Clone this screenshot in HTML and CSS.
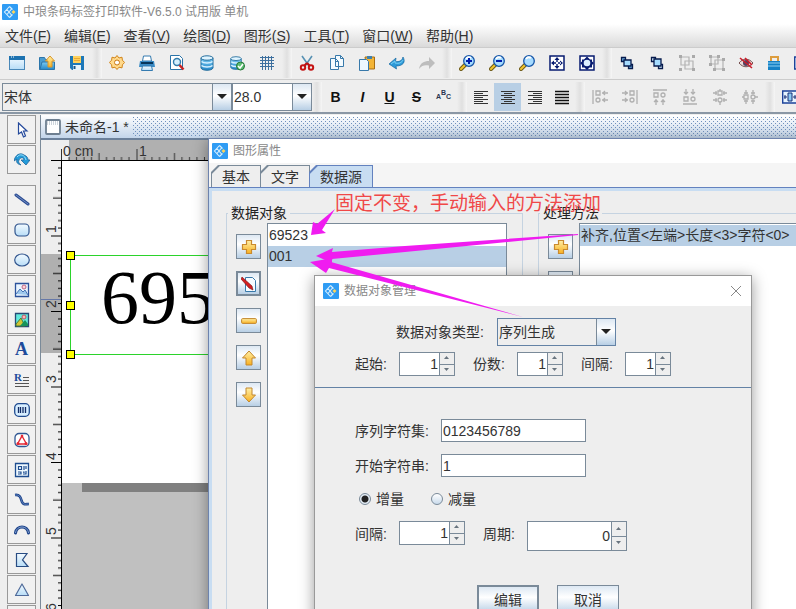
FILE: index.html
```html
<!DOCTYPE html>
<html lang="zh-CN">
<head>
<meta charset="utf-8">
<title>中琅条码标签打印软件</title>
<link rel="stylesheet" href="styles.css">
</head>
<body>
<svg class="sprite" aria-hidden="true">
  <defs>
    <linearGradient id="sky" x1="0" y1="0" x2="0" y2="1"><stop offset="0" stop-color="#f4fbff"/><stop offset="1" stop-color="#b8ddf7"/></linearGradient>
    <linearGradient id="blue" x1="0" y1="0" x2="0" y2="1"><stop offset="0" stop-color="#7ccbf3"/><stop offset="1" stop-color="#2487c8"/></linearGradient>
    <linearGradient id="gold" x1="0" y1="0" x2="0" y2="1"><stop offset="0" stop-color="#fff0a8"/><stop offset="1" stop-color="#f8b020"/></linearGradient>
  </defs>
  <symbol id="logo" viewBox="0 0 16 16"><rect width="16" height="16" rx="1" fill="#2f9cf4"/><path d="m7.500 2.500-5 5.500 5 5.500M9.500 5 7 8l2.500 3M7.500 2.500l3 3M7.500 13.500l3-3M5 5.500l2 2.500-2 2.500" fill="none" stroke="#d6efff" stroke-width="1.100"/><path d="m11.500 6 2 2-2 2-2-2z" fill="#ffd45a"/></symbol>
  <symbol id="new" viewBox="0 0 16 16"><rect x=".5" y="1.500" width="15" height="13" fill="url(#sky)" stroke="#4a88b8"/><path d="M0 1h16v4H0z" fill="#1d72b0"/><path d="M2 2h1m1 0h1" stroke="#fff"/></symbol>
  <symbol id="open" viewBox="0 0 16 16"><path d="M.5 14.500v-12h5l1 2h4v10z" fill="#4a9cd0" stroke="#2b75aa"/><path d="M1 14.500 3 7h12.500v7.500z" fill="url(#blue)" stroke="#2b75aa"/><path d="m11 1 4.500 5H13v6H9V6H6.500z" fill="url(#gold)" stroke="#d8962a"/></symbol>
  <symbol id="save" viewBox="0 0 16 16"><path d="M1 1h14v14H3l-2-2z" fill="#1d78b8"/><path d="M4 1h8v7H4z" fill="#ffd35c"/><path d="M5 3.500h6M5 5.500h6" stroke="#e8a838"/><path d="M4 10h8v5H4z" fill="#e5f3fc"/><path d="M5.500 11v3" stroke="#14578a" stroke-width="2"/></symbol>
  <symbol id="gear" viewBox="0 0 16 16"><path d="M8 .5 10 3l3-.8.4 3 2.200 2.300-2.200 2.300-.4 3.100-3-.7-2 2.300-2-2.300-3 .7-.4-3.100L.4 7.500l2.200-2.300.4-3 3 .8z" fill="#ffd98c" stroke="#d18419"/><circle cx="8" cy="7.500" r="2.500" fill="#fff" stroke="#c97813"/></symbol>
  <symbol id="print" viewBox="0 0 16 16"><path d="M4.500 1h7l1 5h-9z" fill="#fff" stroke="#347bb0"/><path d="M1 6h14l1 6H0z" fill="#3a8ac4"/><path d="M2 8h12" stroke="#08355a" stroke-width="2"/><path d="m3.500 11-1 4.500h11l-1-4.500z" fill="url(#sky)" stroke="#347bb0"/></symbol>
  <symbol id="preview" viewBox="0 0 16 16"><path d="M1.500.5h9l3 3v11h-12z" fill="#fff" stroke="#2a73a8"/><circle cx="8" cy="7" r="3.500" fill="#d5effd" stroke="#317bab" stroke-width="1.400"/><path d="m10.500 10 4 4.500" stroke="#c52525" stroke-width="2.500"/></symbol>
  <symbol id="db" viewBox="0 0 16 16"><path d="M2 3v10c1 3 11 3 12 0V3" fill="url(#blue)" stroke="#256e9d"/><ellipse cx="8" cy="3" rx="6" ry="2.200" fill="#dff4ff" stroke="#256e9d"/><path d="M2.500 6.500c2 2 9 2 11 0m-11 4c2 2 9 2 11 0" fill="none" stroke="#d7f1ff" stroke-width="1.500"/></symbol>
  <symbol id="dbok" viewBox="0 0 16 16"><use href="#db" width="14" height="16"/><circle cx="11.500" cy="11" r="4" fill="#5cbc70" stroke="#217535"/><path d="m9 11 2 2 3-4" fill="none" stroke="#fff" stroke-width="1.500"/></symbol>
  <symbol id="grid" viewBox="0 0 16 16"><path d="M1 2.500h14m-14 3h14m-14 3h14m-14 3h14M3.500 1v14m3-14v14m3-14v14m3-14v14" stroke="#3c6f9e"/></symbol>
  <symbol id="cut" viewBox="0 0 16 16"><path d="m3 1 7 10M13 1 6 11" stroke="#5791b3" stroke-width="1.600"/><path d="m8 8-3 3m3-3 3 3" stroke="#bd1111" stroke-width="2"/><circle cx="4" cy="12.500" r="2.200" fill="none" stroke="#c51313" stroke-width="2"/><circle cx="12" cy="12.500" r="2.200" fill="none" stroke="#c51313" stroke-width="2"/></symbol>
  <symbol id="copy" viewBox="0 0 16 16"><path d="M6.500.5h5l3 3v8h-8zM1.500 3.500h5l3 3v8h-8z" fill="#f4fbff" stroke="#3879aa"/><path d="M11.500.5v3h3M6.500 3.500v3h3" fill="none" stroke="#3879aa"/></symbol>
  <symbol id="paste" viewBox="0 0 16 16"><path d="M6 2h9.500v12H8z" fill="#f3b436" stroke="#a76d14"/><path d="M8 1h5v3H8z" fill="#3d81ae"/><path d="M.5 4.500h7l2 2v9h-9z" fill="#edf8ff" stroke="#3879aa"/></symbol>
  <symbol id="undo" viewBox="0 0 16 16"><path d="M0 9 7 3l-.5 3.500C10 7 13 6 14 2c3 5 0 9-7 9l.5 3z" fill="#2d9ad8" stroke="#1868a0" stroke-width=".7"/><path d="m2 9 4-3v2c4 1 7-.5 8-3" fill="none" stroke="#7ad1f6"/></symbol>
  <symbol id="redo" viewBox="0 0 16 16"><path d="M16 8 10 2v4C5 6 1 8 0 14c3-4 6-4 10-3.500V14z" fill="#bdbdbd"/></symbol>
  <symbol id="lens" viewBox="0 0 16 16"><path d="M6.500 9.500 2 14" stroke="#6f5b16" stroke-width="4" stroke-linecap="round"/><path d="M6 10 2 14" stroke="#f2c42b" stroke-width="2" stroke-linecap="round"/><circle cx="10" cy="6" r="5.300" fill="#a6dbff" stroke="#1555a8" stroke-width="1.300"/><path d="M7 4q2-3 5-1" fill="none" stroke="#fff" stroke-width="2"/></symbol>
  <symbol id="zoomin" viewBox="0 0 16 16"><use href="#lens"/><path d="M7 6h6m-3-3v6" stroke="#001cac" stroke-width="2"/></symbol>
  <symbol id="zoomout" viewBox="0 0 16 16"><use href="#lens"/><path d="M7 6h6" stroke="#001cac" stroke-width="2"/></symbol>
  <symbol id="fit" viewBox="0 0 16 16"><path d="M1 1h14v14H1z" fill="#fff" stroke="#071b70" stroke-width="1.500"/><path d="m8 2 2.500 3h-5zM8 14l-2.500-3h5zM2 8l3-2.500v5zm12 0-3-2.500v5zM7.300 4h1.400v3H7.300zm0 5h1.400v3H7.300zM4 7.300h3v1.400H4zm5 0h3v1.400H9z" fill="#071b70"/></symbol>
  <symbol id="full" viewBox="0 0 16 16"><path d="M1 1h14v14H1z" fill="#fff" stroke="#071b70" stroke-width="1.500"/><path d="m8 1.500 3 3h2v2l2 1.500-2 2v2.500h-2.500L8 15l-2.500-2.500H3V10L1 8l2-1.500v-2h2z" fill="#071b70"/><circle cx="8" cy="8" r="3.300" fill="#dcefff"/></symbol>
  <symbol id="front" viewBox="0 0 16 16"><path d="M2.500 2.500h4v4h-4zm7 7h4v4h-4z" fill="#6badde" stroke="#071b4d" stroke-width="1.300"/><path d="M5 5h7v6H5z" fill="#a6dcff" stroke="#071b4d" stroke-width="1.300"/></symbol>
  <symbol id="back" viewBox="0 0 16 16"><path d="M2.500 2.500h4v4h-4zm7 7h4v4h-4z" fill="#d7efff" stroke="#071b4d" stroke-width="1.300"/><path d="M5 4h7v7H5z" fill="#a6dcff" stroke="#071b4d" stroke-width="1.300"/></symbol>
  <symbol id="group" viewBox="0 0 16 16"><path d="M2 2h8v8H2zM6 6h8v8H6z" fill="none" stroke="#b4b4b4" stroke-width="1.200"/><path d="M0 0h3v3H0zm13 0h3v3h-3zM0 13h3v3H0zm13 0h3v3h-3z" fill="#aaa"/></symbol>
  <symbol id="ungroup" viewBox="0 0 16 16"><path d="M2 2h7v7H2zM6 5h8v9H6z" fill="none" stroke="#b4b4b4" stroke-width="1.200"/><path d="M0 0h3v3H0zm8 0h3v3H8zM0 8h3v3H0zm13-5h3v3h-3zm0 10h3v3h-3zM4 13h3v3H4z" fill="#aaa"/></symbol>
  <symbol id="hide" viewBox="0 0 16 16"><path d="M1 8c4-5 10-5 14 0-4 5-10 5-14 0z" fill="#e9dada" stroke="#775151"/><circle cx="8" cy="8" r="3" fill="#534262"/><path d="m2 3 12 10M7 3l7 7" stroke="#cb1c2a" stroke-width="1.600"/></symbol>
  <symbol id="lock" viewBox="0 0 16 16"><path d="M5 7V2h7v5" fill="none" stroke="#dd9d3e" stroke-width="2"/><path d="M2 6h12v9H2z" fill="#1681c5"/><path d="M2 8h12M2 11h12" stroke="#8ed1f3"/></symbol>
  <symbol id="aleft" viewBox="0 0 16 16"><path d="M1 2.500h14M1 4.500h9M1 6.500h14M1 8.500h9M1 10.500h14M1 12.500h9M1 14.500h14" stroke="#333"/></symbol>
  <symbol id="acenter" viewBox="0 0 16 16"><path d="M1 2.500h14M4 4.500h8M1 6.500h14M4 8.500h8M1 10.500h14M4 12.500h8M1 14.500h14" stroke="#333"/></symbol>
  <symbol id="aright" viewBox="0 0 16 16"><path d="M1 2.500h14M6 4.500h9M1 6.500h14M6 8.500h9M1 10.500h14M6 12.500h9M1 14.500h14" stroke="#333"/></symbol>
  <symbol id="ajust" viewBox="0 0 16 16"><path d="M1 2.500h14M1 5.500h14M1 8.500h14M1 11.500h14M1 14.500h14" stroke="#111" stroke-width="1.300"/></symbol>
  <symbol id="dleft" viewBox="0 0 16 16"><g fill="none" stroke="#b0b0b0" stroke-width="1.300"><path d="M1 1v14M4 2h4v4H4zM10 4h6m-3-2-2 2 2 2M10 11h6m-3-2-2 2 2 2"/><circle cx="6" cy="11" r="2"/></g></symbol>
  <symbol id="dright" viewBox="0 0 16 16"><use href="#dleft" transform="matrix(-1 0 0 1 16 0)"/></symbol>
  <symbol id="dtop" viewBox="0 0 16 16"><use href="#dleft" transform="matrix(0 1 1 0 0 0)"/></symbol>
  <symbol id="dbottom" viewBox="0 0 16 16"><use href="#dleft" transform="matrix(0 -1 1 0 0 16)"/></symbol>
  <symbol id="dmid" viewBox="0 0 16 16"><g fill="none" stroke="#b0b0b0" stroke-width="1.300"><path d="M6 2h4v4H6zM1 4h4m6 0h4M1 11h4m6 0h4M4 2v4m8-4v4M4 9v4m8-4v4M8 0v2m0 11v3"/><circle cx="8" cy="11" r="2"/></g></symbol>
  <symbol id="dvert" viewBox="0 0 16 16"><use href="#dmid" transform="matrix(0 1 1 0 0 0)"/></symbol>
  <symbol id="width" viewBox="0 0 16 16"><path d="M.7 2h14.600v12H.7z" fill="#e6f4ff" stroke="#1d439a" stroke-width="1.400"/><path d="M6 4h4v8H6z" fill="#8cc9f2" stroke="#172f77"/><path d="M2 8h3m6 0h3M3 6v4m10-4v4" stroke="#172f77"/></symbol>
  <symbol id="cursor" viewBox="0 0 16 16"><path d="M4.500 1v11l3-2 2 5 2-1-2-5h3.500z" fill="#fff" stroke="#24499b" stroke-width="1.200"/></symbol>
  <symbol id="rotate" viewBox="0 0 16 16"><path d="M0 9C1 3 6 0 10 3c3 1 4 3 4 5h2l-4 5-5-5h3c0-3-4-3-5 0-1 2 0 3 2 5-4-1-5-3-4-6z" fill="#249cda" stroke="#21669c" stroke-width=".8"/><path d="M3 5c3-4 8-2 9 3" fill="none" stroke="#9de2fb"/></symbol>
  <symbol id="line" viewBox="0 0 16 16"><path d="m2 3 12 9" stroke="#2c4c93" stroke-width="3" stroke-linecap="round"/><path d="m2 3 12 9" stroke="#7290c5" stroke-linecap="round"/></symbol>
  <symbol id="rrect" viewBox="0 0 16 16"><rect x="1" y="2" width="14" height="12" rx="4" fill="url(#sky)" stroke="#31558e" stroke-width="1.200"/></symbol>
  <symbol id="oval" viewBox="0 0 16 16"><ellipse cx="8" cy="8" rx="7.300" ry="6" fill="url(#sky)" stroke="#31558e" stroke-width="1.200"/></symbol>
  <symbol id="photo" viewBox="0 0 16 16"><path d="M1.500 1.500h13v13h-13z" fill="#eaf5ff" stroke="#2c529b" stroke-width="1.300"/><path d="m2 12 4-5 3 3 2-2 3 5" fill="#9ec8ed" stroke="#4773b4"/><circle cx="10" cy="5" r="2" fill="#ffd5da" stroke="#bc6684"/></symbol>
  <symbol id="color" viewBox="0 0 16 16"><path d="M1.500 1.500h13v13h-13z" fill="#62eadd" stroke="#264a75" stroke-width="1.300"/><path d="m2 12 5-6 4 8H2z" fill="#d3c635" stroke="#4a7d35"/><path d="m6 14 5-6 3 4v2z" fill="#17935b"/><circle cx="10" cy="5" r="2" fill="#ffb5ba" stroke="#b65a62"/></symbol>
  <symbol id="rich" viewBox="0 0 16 16"><text x="0" y="9" class="glyph-rich">R</text><path d="M9 5.500h6M9 8.500h6M1 11.500h14M1 14.500h14" stroke="#555"/></symbol>
  <symbol id="barcode" viewBox="0 0 16 16"><rect x=".7" y="1.700" width="14.600" height="12.600" rx="4" fill="#d7eeff" stroke="#204b90" stroke-width="1.300"/><path d="M4.500 5v6m2-6v6m2.500-6v6m2.500-6v6" stroke="#122b66" stroke-width="1.300"/></symbol>
  <symbol id="shape" viewBox="0 0 16 16"><rect x="1" y="1.500" width="14" height="13" rx="4" fill="#fff" stroke="#315894" stroke-width="1.300"/><path d="m8 4 4.500 8h-9z" fill="#fff" stroke="#e52935" stroke-width="1.400"/><circle cx="8" cy="4" r="1.300" fill="#e52935"/><circle cx="4" cy="11.500" r="1.500" fill="#e52935"/><circle cx="12" cy="11.500" r="1.500" fill="#e52935"/></symbol>
  <symbol id="qr" viewBox="0 0 16 16"><path d="M1.500 1.500h13v13h-13z" fill="#eef8ff" stroke="#1e4d90" stroke-width="1.300"/><path d="M4.500 4.500h3v3h-3zM10 4v4m2-4v3M4 10h3v2H4m5-2h1v1m2-2v3H9" fill="none" stroke="#1e4d90" stroke-width="1.200"/></symbol>
  <symbol id="curve" viewBox="0 0 16 16"><path d="M1 3c8-1 5 8 9 9 1 .5 3 0 5 0" fill="none" stroke="#1d438b" stroke-width="2.600"/><path d="M1 3c8-1 5 8 9 9 1 .5 3 0 5 0" fill="none" stroke="#7698cb" stroke-width=".7"/></symbol>
  <symbol id="arc" viewBox="0 0 16 16"><path d="M1.500 11c1-8 12-8 13 0" fill="none" stroke="#1d438b" stroke-width="3" stroke-linecap="round"/><path d="M1.500 11c1-8 12-8 13 0" fill="none" stroke="#88a6d2"/></symbol>
  <symbol id="poly" viewBox="0 0 16 16"><path d="M2.500 1.500H13L8.500 8l5.500 6.500H2.500z" fill="url(#sky)" stroke="#284c83" stroke-width="1.200"/></symbol>
  <symbol id="tri" viewBox="0 0 16 16"><path d="m8 2 6.500 11.500h-13z" fill="url(#sky)" stroke="#506b9a" stroke-width="1.200" stroke-linejoin="round"/></symbol>
  <symbol id="page" viewBox="0 0 16 16"><rect x="1" y="1" width="14" height="14" rx="1" fill="#fff" stroke="#6e7f90" stroke-width="1.800"/><path d="M2 3h12M2 5h12" stroke="#9cabb9" stroke-dasharray="1 1"/></symbol>
  <symbol id="plus" viewBox="0 0 16 16"><path d="M5.500 1.500h5v4h4v5h-4v4h-5v-4h-4v-5h4z" fill="url(#gold)" stroke="#c98a30" stroke-width="1.200"/></symbol>
  <symbol id="edit" viewBox="0 0 16 16"><path d="M4.500 1.500h7l3 3v11h-10z" fill="#f5fbff" stroke="#3879aa"/><path d="m1 1 10 9 1 4-4-2L0 3z" fill="#d31e20" stroke="#701212" stroke-width=".6"/></symbol>
  <symbol id="minus" viewBox="0 0 16 16"><rect x=".6" y="5.600" width="14.800" height="4.800" rx="1" fill="url(#gold)" stroke="#c2872f"/></symbol>
  <symbol id="up" viewBox="0 0 16 16"><path d="m8 1 6.500 7H11v7H5V8H1.500z" fill="url(#gold)" stroke="#c2872f" stroke-linejoin="round"/></symbol>
  <symbol id="down" viewBox="0 0 16 16"><path d="m8 15 6.500-7H11V1H5v7H1.500z" fill="url(#gold)" stroke="#c2872f" stroke-linejoin="round"/></symbol>
  <symbol id="caret" viewBox="0 0 10 6"><path d="M0 0h10L5 5z" fill="#222"/></symbol>
  <symbol id="spinup" viewBox="0 0 6 4"><path d="M0 3h5L2.500 0z" fill="#68747f"/></symbol>
  <symbol id="spindown" viewBox="0 0 6 4"><path d="M0 0h5L2.500 3z" fill="#68747f"/></symbol>
</svg>

<div class="app">
  <header class="titlebar"><svg class="icon"><use href="#logo"/></svg><span>中琅条码标签打印软件-V6.5.0 试用版 单机</span></header>
  <nav class="menubar">
    <a href="#">文件(<u>F</u>)</a><a href="#">编辑(<u>E</u>)</a><a href="#">查看(<u>V</u>)</a><a href="#">绘图(<u>D</u>)</a><a href="#">图形(<u>S</u>)</a><a href="#">工具(<u>T</u>)</a><a href="#">窗口(<u>W</u>)</a><a href="#">帮助(<u>H</u>)</a>
  </nav>
  <div class="toolbar">
    <button aria-label="新建"><svg class="icon"><use href="#new"/></svg></button>
    <button aria-label="打开"><svg class="icon"><use href="#open"/></svg></button>
    <button aria-label="保存"><svg class="icon"><use href="#save"/></svg></button>
    <i class="sep"></i>
    <button aria-label="设置"><svg class="icon"><use href="#gear"/></svg></button>
    <button aria-label="打印"><svg class="icon"><use href="#print"/></svg></button>
    <button aria-label="预览"><svg class="icon"><use href="#preview"/></svg></button>
    <button aria-label="数据库"><svg class="icon"><use href="#db"/></svg></button>
    <button aria-label="刷新数据库"><svg class="icon"><use href="#dbok"/></svg></button>
    <button aria-label="网格"><svg class="icon"><use href="#grid"/></svg></button>
    <i class="sep"></i>
    <button aria-label="剪切"><svg class="icon"><use href="#cut"/></svg></button>
    <button aria-label="复制"><svg class="icon"><use href="#copy"/></svg></button>
    <button aria-label="粘贴"><svg class="icon"><use href="#paste"/></svg></button>
    <button aria-label="撤销"><svg class="icon"><use href="#undo"/></svg></button>
    <button aria-label="重做"><svg class="icon"><use href="#redo"/></svg></button>
    <i class="sep"></i>
    <button aria-label="放大"><svg class="icon"><use href="#zoomin"/></svg></button>
    <button aria-label="缩小"><svg class="icon"><use href="#zoomout"/></svg></button>
    <button aria-label="缩放"><svg class="icon"><use href="#lens"/></svg></button>
    <button aria-label="适合页面"><svg class="icon"><use href="#fit"/></svg></button>
    <button aria-label="全部"><svg class="icon"><use href="#full"/></svg></button>
    <i class="sep"></i>
    <button aria-label="置前"><svg class="icon"><use href="#front"/></svg></button>
    <button aria-label="置后"><svg class="icon"><use href="#back"/></svg></button>
    <button aria-label="组合"><svg class="icon"><use href="#group"/></svg></button>
    <button aria-label="取消组合"><svg class="icon"><use href="#ungroup"/></svg></button>
    <button aria-label="隐藏" class="narrow"><svg class="icon"><use href="#hide"/></svg></button>
    <button aria-label="锁定" class="narrow"><svg class="icon"><use href="#lock"/></svg></button>
    <button aria-label="全屏" class="narrow"><svg class="icon"><use href="#width"/></svg></button>
  </div>
  <div class="toolbar formatbar">
    <div class="combo combo-font"><select aria-label="字体"><option>宋体</option></select><span class="combo-arrow"><svg><use href="#caret"/></svg></span></div>
    <div class="combo combo-size"><select aria-label="字号"><option>28.0</option></select><span class="combo-arrow"><svg><use href="#caret"/></svg></span></div>
    <i class="sep"></i>
    <div class="styles">
      <button><b>B</b></button><button><em>I</em></button><button><u>U</u></button><button><s>S</s></button><button class="wave"><span>A</span><sup>B</sup><span>C</span></button>
    </div>
    <i class="sep"></i>
    <div class="styles">
      <button aria-label="左对齐"><svg class="icon"><use href="#aleft"/></svg></button>
      <button aria-label="居中" class="active"><svg class="icon"><use href="#acenter"/></svg></button>
      <button aria-label="右对齐"><svg class="icon"><use href="#aright"/></svg></button>
      <button aria-label="两端对齐"><svg class="icon"><use href="#ajust"/></svg></button>
    </div>
    <i class="sep"></i>
    <button aria-label="图形左对齐"><svg class="icon"><use href="#dleft"/></svg></button>
    <button aria-label="图形右对齐"><svg class="icon"><use href="#dright"/></svg></button>
    <button aria-label="图形上对齐"><svg class="icon"><use href="#dtop"/></svg></button>
    <button aria-label="图形下对齐"><svg class="icon"><use href="#dbottom"/></svg></button>
    <button aria-label="水平居中"><svg class="icon"><use href="#dmid"/></svg></button>
    <button aria-label="垂直居中"><svg class="icon"><use href="#dvert"/></svg></button>
    <i class="sep"></i>
    <button aria-label="等宽"><svg class="icon"><use href="#width"/></svg></button>
  </div>

  <main class="workspace">
    <aside class="tools">
      <button aria-label="选择"><svg class="icon"><use href="#cursor"/></svg></button>
      <button aria-label="旋转"><svg class="icon"><use href="#rotate"/></svg></button>
      <i class="tool-gap"></i>
      <button aria-label="直线"><svg class="icon"><use href="#line"/></svg></button>
      <button aria-label="矩形"><svg class="icon"><use href="#rrect"/></svg></button>
      <button aria-label="椭圆"><svg class="icon"><use href="#oval"/></svg></button>
      <button aria-label="图片"><svg class="icon"><use href="#photo"/></svg></button>
      <button aria-label="彩色图片"><svg class="icon"><use href="#color"/></svg></button>
      <button class="letter">A</button>
      <button aria-label="富文本"><svg class="icon"><use href="#rich"/></svg></button>
      <button aria-label="条形码"><svg class="icon"><use href="#barcode"/></svg></button>
      <button aria-label="矢量图"><svg class="icon"><use href="#shape"/></svg></button>
      <button aria-label="二维码"><svg class="icon"><use href="#qr"/></svg></button>
      <button aria-label="曲线"><svg class="icon"><use href="#curve"/></svg></button>
      <button aria-label="弧线"><svg class="icon"><use href="#arc"/></svg></button>
      <button aria-label="多边形"><svg class="icon"><use href="#poly"/></svg></button>
      <button aria-label="三角形"><svg class="icon"><use href="#tri"/></svg></button>
      <button aria-label="更多"></button>
    </aside>
    <section class="document">
      <div class="doc-tab"><svg class="icon"><use href="#page"/></svg><span>未命名-1 *</span><svg class="stipple"><defs><pattern id="dots" width="4" height="4" patternUnits="userSpaceOnUse"><path d="M0 0h1v1H0zM2 2h1v1H2z" fill="#6f90bd"/></pattern></defs><rect width="100%" height="100%" fill="url(#dots)"/></svg></div>
      <svg class="ruler-x">
        <defs><pattern id="tx" x="20" width="75.500" height="20" patternUnits="userSpaceOnUse"><path d="M.5 9v11M8 17v3m7.500-3v3M23 17v3m7.500-3v3M38 13v7m7.500-3v3M53 17v3m7.500-3v3M68 17v3" stroke="#333"/></pattern></defs>
        <rect x="28" width="100%" height="20" fill="#b0b0b0"/>
        <rect x="20" width="100%" height="20" fill="url(#tx)"/>
        <path d="M10 20.500h2000" stroke="#000"/>
        <text x="22" y="16">0 cm</text><text x="98" y="16">1</text>
      </svg>
      <div class="doc-body">
        <svg class="ruler-y">
          <defs><pattern id="ty" y="-1" width="21" height="75.500" patternUnits="userSpaceOnUse"><path d="M10 .5h11M17 8h4m-4 7.500h4M17 23h4m-4 7.500h4M12 38h9m-4 7.500h4M17 53h4m-4 7.500h4M17 68h4" stroke="#000"/></pattern></defs>
          <rect y="93" width="20" height="99" fill="#b0b0b0"/>
          <rect width="21" height="100%" fill="url(#ty)"/>
          <path d="M20.500 0v2000" stroke="#000"/><path d="M0 138.500h20" stroke="#6678a8"/>
          <text transform="translate(15 72) rotate(-90)">1</text><text transform="translate(15 147) rotate(-90)">2</text><text transform="translate(15 222) rotate(-90)">3</text><text transform="translate(15 299) rotate(-90)">4</text><text transform="translate(15 374) rotate(-90)">5</text><text transform="translate(15 450) rotate(-90)">6</text>
        </svg>
        <div class="canvas">
          <div class="paper"><div class="selection"><i></i><i></i><i></i><span>695</span></div></div>
          <div class="paper-shadow"></div>
        </div>
      </div>
    </section>
  </main>

  <section class="window props">
    <header class="window-title"><svg class="icon"><use href="#logo"/></svg><span>图形属性</span></header>
    <div class="tabs"><button>基本</button><button>文字</button><button class="active">数据源</button></div>
    <div class="tab-body">
      <fieldset class="source">
        <legend>数据对象</legend>
        <div class="actions">
          <button aria-label="添加"><svg class="icon"><use href="#plus"/></svg></button>
          <button aria-label="编辑" class="focus"><svg class="icon"><use href="#edit"/></svg></button>
          <button aria-label="删除"><svg class="icon"><use href="#minus"/></svg></button>
          <button aria-label="上移"><svg class="icon"><use href="#up"/></svg></button>
          <button aria-label="下移"><svg class="icon"><use href="#down"/></svg></button>
        </div>
        <ul class="list"><li>69523</li><li class="selected">001</li></ul>
      </fieldset>
      <fieldset class="method">
        <legend>处理方法</legend>
        <div class="actions">
          <button aria-label="添加方法"><svg class="icon"><use href="#plus"/></svg></button>
          <button aria-label="编辑方法"><svg class="icon"><use href="#edit"/></svg></button>
        </div>
        <ul class="list"><li class="selected">补齐,位置&lt;左端&gt;长度&lt;3&gt;字符&lt;0&gt;</li></ul>
      </fieldset>
    </div>
  </section>

  <section class="window manager">
    <header class="window-title"><svg class="icon"><use href="#logo"/></svg><span>数据对象管理</span><button class="close" aria-label="关闭"><svg viewBox="0 0 12 12"><path d="m1 1 10 10M11 1 1 11" stroke="#888" fill="none"/></svg></button></header>
    <form>
      <div class="part head">
        <div class="row type-row"><label for="type">数据对象类型:</label><div class="combo combo-type"><select id="type"><option>序列生成</option></select><span class="combo-arrow"><svg><use href="#caret"/></svg></span></div></div>
        <div class="row counts">
          <label for="from">起始:</label><div class="spin w56"><input id="from" value="1"><div><button type="button" aria-label="增加"><svg><use href="#spinup"/></svg></button><button type="button" aria-label="减少"><svg><use href="#spindown"/></svg></button></div></div>
          <label for="copies">份数:</label><div class="spin w46"><input id="copies" value="1"><div><button type="button" aria-label="增加"><svg><use href="#spinup"/></svg></button><button type="button" aria-label="减少"><svg><use href="#spindown"/></svg></button></div></div>
          <label for="gap1">间隔:</label><div class="spin w46"><input id="gap1" value="1"><div><button type="button" aria-label="增加"><svg><use href="#spinup"/></svg></button><button type="button" aria-label="减少"><svg><use href="#spindown"/></svg></button></div></div>
        </div>
      </div>
      <div class="part series">
        <div class="row"><label class="wide" for="chars">序列字符集:</label><input class="field" id="chars" value="0123456789"></div>
        <div class="row"><label class="wide" for="start">开始字符串:</label><input class="field" id="start" value="1"></div>
        <div class="row radios"><label><input type="radio" name="dir" checked>增量</label><label><input type="radio" name="dir">减量</label></div>
        <div class="row steps">
          <label for="gap2">间隔:</label><div class="spin w66"><input id="gap2" value="1"><div><button type="button" aria-label="增加"><svg><use href="#spinup"/></svg></button><button type="button" aria-label="减少"><svg><use href="#spindown"/></svg></button></div></div>
          <label for="cycle">周期:</label><div class="spin w100"><input id="cycle" value="0"><div><button type="button" aria-label="增加"><svg><use href="#spinup"/></svg></button><button type="button" aria-label="减少"><svg><use href="#spindown"/></svg></button></div></div>
        </div>
        <div class="row buttons"><button type="button" class="default">编辑</button><button type="button">取消</button></div>
      </div>
    </form>
  </section>

  <p class="note">固定不变，手动输入的方法添加</p>
  <svg class="arrows" aria-hidden="true" fill="#f01cf0">
    <path d="m311 235 2-13 4 2 18-15-13 21 4 3z"/>
    <path d="m316 256 17-8-1 4 73-6 173-12v1l-173 17-73 7v4z"/>
    <path d="m310 262 23-4-2 4 192 55-194-49-3 5z"/>
  </svg>
</div>
</body>
</html>
```
FILE: styles.css
```css
* { box-sizing: border-box; }

body {
  margin: 0;
  font: 14px/20px "Liberation Sans", "Noto Sans CJK SC", sans-serif;
  color: #333;
}

button, input, select { font: inherit; color: inherit; margin: 0; padding: 0; border: 0; border-radius: 0; background: none; }
button { display: flex; align-items: center; justify-content: center; }
select { appearance: none; }
ul { margin: 0; padding: 0; list-style: none; }

.sprite { position: absolute; width: 0; height: 0; }
.icon { width: 16px; height: 16px; flex: none; display: block; }
.glyph-rich { font: bold 11px "Liberation Serif", serif; fill: #1d4b9b; }

.app { position: relative; height: 100vh; display: flex; flex-direction: column; overflow: hidden; background: #eee; }

.titlebar { display: flex; align-items: center; gap: 5px; height: 24px; padding-left: 2px; font-size: 12px; color: #888; background: #fff; flex: none; }

.menubar { display: flex; align-items: center; gap: 13px; height: 24px; padding-left: 5px; flex: none; background: linear-gradient(#fff, #dadada); border-bottom: 1px solid #ccc; }
.menubar a { color: #333; text-decoration: none; white-space: nowrap; }

.toolbar { display: flex; align-items: center; height: 32px; padding: 0 0 1px 2px; flex: none; background: #eee; border-bottom: 1px solid #ccc; overflow: hidden; }
.toolbar button { width: 30px; height: 28px; flex: none; }
.toolbar .narrow { width: 28px; }
.sep { width: 10px; height: 30px; flex: none; background: linear-gradient(90deg, #eee, #e0e0e0 50%, #f6f6f6); }

.formatbar { height: 34px; padding: 2px 0 0 2px; border-bottom: 2px solid #8a97a5; }
.styles { display: flex; }
.formatbar .styles button { width: 27px; color: #111; }
.formatbar .styles .active { background: #b8cfe5; }
.styles b, .styles em, .styles u, .styles s { font-weight: bold; }
.formatbar .styles .wave { font-size: 7px; font-weight: bold; color: #2b3550; }
.wave sup { font-size: 7px; line-height: 20px; align-self: flex-start; }

.combo { display: flex; height: 28px; border: 1px solid #7a8a99; background: #eee; flex: none; }
.combo select { flex: 1; min-width: 0; padding-left: 1px; }
.combo-arrow { width: 19px; display: flex; align-items: center; justify-content: center; border-left: 1px solid #7a8a99; background: linear-gradient(#dde8f3, #fff 45%, #b8cfe5); pointer-events: none; }
.combo-arrow svg { width: 10px; height: 6px; }
.combo-font { width: 230px; }
.combo-size { width: 80px; background: #fff; }
.combo-type { width: 119px; border-color: #6382a5; }

.workspace { flex: 1; min-height: 0; display: flex; }
.tools { width: 40px; flex: none; display: flex; flex-direction: column; align-items: center; gap: 1px; padding: 1px 0 0 3px; overflow: hidden; }
.tools button { width: 29px; height: 29px; flex: none; border: 1px solid #999; background: #f1f1f1; }
.tool-gap { height: 9px; flex: none; }
.tools .letter { font: bold 18px "Liberation Serif", serif; color: #1d4b9b; }

.document { flex: 1; min-width: 0; display: flex; flex-direction: column; border-left: 1px solid #7a8a99; margin-top: 1px; }
.doc-tab { display: flex; align-items: center; gap: 4px; height: 25px; padding-left: 4px; flex: none; background: linear-gradient(#fff, #c3d5ea); border-bottom: 2px solid #6b809a; }
.stipple { flex: 1; min-width: 0; height: 19px; }
.ruler-x { display: block; width: 100%; height: 21px; flex: none; }
.ruler-x text, .ruler-y text { font-size: 14px; fill: #333; }
.doc-body { flex: 1; min-height: 0; display: flex; }
.ruler-y { width: 21px; height: 100%; flex: none; }
.canvas { flex: 1; background: #c0c0c0; overflow: hidden; }
.paper { height: 322px; padding: 94px 0 0 8px; background: #fff; }
.selection { position: relative; height: 100px; border: 1px solid #2bd32b; padding-left: 30px; font: 76px/82px "Liberation Serif", serif; color: #000; }
.selection i { position: absolute; left: -5px; width: 9px; height: 9px; background: #ff0; border: 1px solid #000; }
.selection i:nth-child(1) { top: -5px; }
.selection i:nth-child(2) { top: 45px; }
.selection i:nth-child(3) { bottom: -5px; }
.paper-shadow { height: 9px; margin-left: 20px; background: #808080; }

.window { position: absolute; background: #eee; border: 1px solid #8b97ad; box-shadow: 0 3px 14px rgba(0, 0, 0, 0.4); }
.window-title { display: flex; align-items: center; gap: 5px; background: #fff; color: #888; font-size: 12px; }

.props { left: 208px; top: 138px; right: -20px; bottom: -20px; display: flex; flex-direction: column; border-color: #6e83ad; }
.props > .window-title { height: 24px; padding-left: 3px; flex: none; }
.tabs { display: flex; padding: 2px 0 0 2px; background: #f5f5f5; border-bottom: 1px solid #6382bf; flex: none; }
.tabs button { height: 22px; padding: 0 10px; border: 1px solid #7a8a99; border-bottom: 0; clip-path: polygon(7px 0, 100% 0, 100% 100%, 0 100%, 0 7px); background: linear-gradient(135deg, #7a8a99 5px, #eee 6px); margin-right: -1px; }
.tabs .active { background: linear-gradient(135deg, #6382bf 5px, #c8ddf2 6px); border-color: #6382bf; }
.tab-body { flex: 1; min-height: 0; display: flex; gap: 15px; padding: 12px 0 0 14px; border: solid #c8ddf2; border-width: 3px 0 0 3px; }
fieldset { margin: 0; border: 1px solid #c5d3e1; min-width: 0; display: flex; gap: 6px; padding: 0 15px 0 9px; }
legend { padding: 0 3px; margin-left: -8px; line-height: 20px; color: #222; }
.source { width: 297px; flex: none; }
.method { flex: 1; }
.actions { display: flex; flex-direction: column; gap: 12px; padding-top: 11px; }
.actions button { width: 25px; height: 25px; border: 1px solid #7a8a99; background: linear-gradient(#dde8f3, #fff 40%, #b8cfe5); }
.actions .focus { border-width: 2px; }
.list { flex: 1; min-width: 0; background: #fff; border: 1px solid #7a8a99; padding-top: 1px; }
.list li { height: 21px; padding-left: 1px; white-space: nowrap; overflow: hidden; }
.list .selected { background: #b8cfe5; }

.manager { left: 314px; top: 275px; width: 438px; border-color: #999; }
.manager > .window-title { height: 30px; padding: 0 9px 0 8px; }
.close { width: 12px; height: 12px; margin-left: auto; }
.close svg { width: 12px; height: 12px; }
.row { display: flex; align-items: center; }
.head { padding: 12px 0 11px 40px; border-bottom: 1px solid #6382a5; }
.type-row { gap: 12px; padding-left: 41px; }
.type-row label { width: 89px; }
.counts { padding-top: 6px; }
.counts label, .steps label { width: 44px; flex: none; }
.counts .spin, .steps .spin { margin-right: 18px; }
.series { display: flex; flex-direction: column; gap: 12px; padding: 31px 0 20px 40px; }
.wide { width: 86px; }
.field { width: 145px; height: 23px; border: 1px solid #7a8a99; background: #fff; padding: 0 1px; }
.radios { gap: 27px; padding-left: 4px; height: 20px; }
.radios label { display: flex; align-items: center; gap: 5px; }
.radios input { appearance: none; width: 12px; height: 12px; border: 1px solid #7a8a99; border-radius: 50%; background: linear-gradient(#fff, #c8daeb); }
.radios input:checked { background: radial-gradient(circle, #222 3px, #e5eef7 4px); }
.spin { display: flex; height: 24px; flex: none; }
.spin input { flex: 1; min-width: 0; text-align: right; background: #fff; border: 1px solid #7a8a99; border-right: 0; padding-right: 1px; }
.spin > div { width: 16px; display: flex; flex-direction: column; border: 1px solid #7a8a99; }
.spin button { flex: 1; min-height: 0; }
.spin button:first-child { border-bottom: 1px solid #7a8a99; }
.spin svg { width: 6px; height: 4px; }
.w56 { width: 56px; }
.w46 { width: 46px; }
.w66 { width: 66px; }
.w100 { width: 100px; }
.steps { align-items: flex-start; height: 30px; }
.steps label { line-height: 26px; }
.steps .w100 { height: 30px; }
.buttons { gap: 18px; padding: 22px 0 0 122px; }
.buttons button { width: 62px; height: 30px; border: 1px solid #7a8a99; background: linear-gradient(#dde8f3, #fff 40%, #b8cfe5); }
.buttons .default { border-width: 2px; }

.note { position: absolute; left: 335px; top: 191px; margin: 0; font-size: 19px; line-height: 26px; color: #f04848; white-space: nowrap; }
.arrows { position: absolute; inset: 0; width: 100%; height: 100%; pointer-events: none; }
```
